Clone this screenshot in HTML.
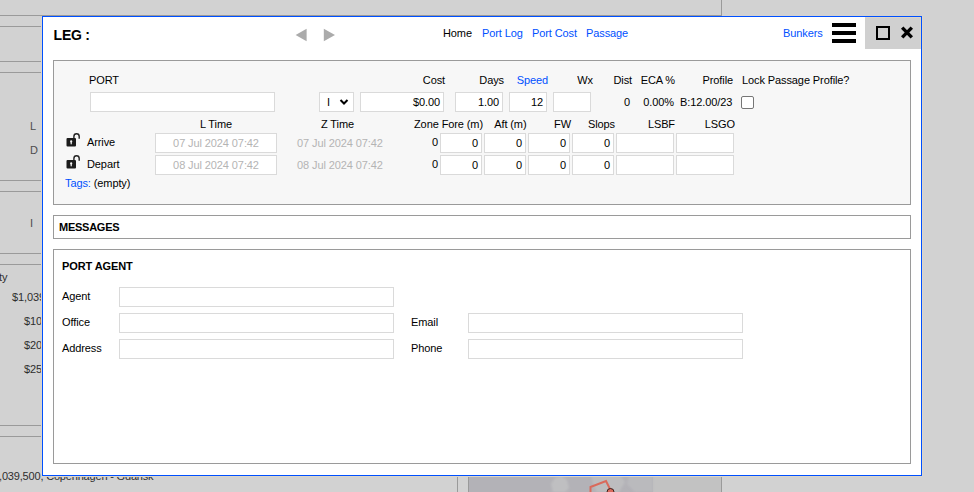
<!DOCTYPE html>
<html><head><meta charset="utf-8">
<style>
*{box-sizing:border-box;margin:0;padding:0}
html,body{width:974px;height:492px;overflow:hidden;background:#d2d2d2;font-family:"Liberation Sans",sans-serif;font-size:11px;color:#000}
.a{position:absolute;white-space:nowrap;line-height:13px;letter-spacing:-0.1px}
.hl{position:absolute;height:1px;background:#9a9a9a}
.vl{position:absolute;width:1px;background:#9a9a9a}
.bt{color:#2e2e2e}
#dlg{position:absolute;left:42px;top:16px;width:880px;height:460px;background:#fff;border:1px solid #0050ff;box-shadow:-1px 0 0 0 #ddd6c9,1px 0 0 0 #ddd6c9,0 1px 0 0 #ddd6c9}
.pn{position:absolute;border:1px solid #9a9a9a}
.p1{background:#f7f7f7}
.in{position:absolute;background:#fff;border:1px solid #dadada;height:20px}
.lnk{color:#0050ff}
.gt{color:#b4b4b4}
.b{font-weight:bold}
</style></head><body>
<!-- background -->
<div class="hl" style="left:0;top:15px;width:722px"></div>
<div class="hl" style="left:0;top:26px;width:42px"></div>
<div class="hl" style="left:0;top:61px;width:42px"></div>
<div class="hl" style="left:0;top:72px;width:42px"></div>
<div class="hl" style="left:0;top:180px;width:42px"></div>
<div class="hl" style="left:0;top:191px;width:42px"></div>
<div class="hl" style="left:0;top:253px;width:42px"></div>
<div class="hl" style="left:0;top:264px;width:42px"></div>
<div class="hl" style="left:0;top:425px;width:42px"></div>
<div class="hl" style="left:0;top:436px;width:42px"></div>
<div class="vl" style="left:721px;top:0;height:16px"></div>
<div class="vl" style="left:457px;top:476px;height:16px"></div>
<div class="vl" style="left:468px;top:476px;height:16px"></div>
<div class="vl" style="left:721px;top:476px;height:16px"></div>
<div style="position:absolute;left:469px;top:476px;width:252px;height:16px;background:#b3b2b7"></div>
<div style="position:absolute;left:653px;top:476px;width:68px;height:16px;background:#c2c2c2"></div>
<svg style="position:absolute;left:469px;top:476px" width="252" height="16">
<defs><filter id="bl" x="-50%" y="-50%" width="200%" height="200%"><feGaussianBlur stdDeviation="1.2"/></filter></defs>
<g filter="url(#bl)" fill="#bfbfc1">
<path d="M86,2 L92,0 L98,4 L100,12 L96,16 L84,16 L82,8 Z"/>
<path d="M122,-2 L150,-2 L156,6 L150,16 L128,16 L124,8 Z" fill="#bdbdbf"/>
<path d="M160,0 L184,0 L184,16 L166,16 L158,8 Z" fill="#bababd"/>
</g>
<polyline points="121.5,16 121.5,11 137,5 141,13" fill="none" stroke="#d96a5c" stroke-width="2"/>
<circle cx="141.5" cy="16" r="3.5" fill="#d96a5c" stroke="#3a1f1a" stroke-width="1"/>
</svg>
<div class="a" style="color:#4d4d4d;left:30px;top:120px">L</div>
<div class="a" style="color:#4d4d4d;left:30px;top:144px">D</div>
<div class="a" style="color:#4d4d4d;left:30px;top:217px">I</div>
<div class="a bt" style="left:-1px;top:271px">ty</div>
<div class="a bt" style="left:12px;top:291px">$1,039</div>
<div class="a bt" style="left:24px;top:315px">$10</div>
<div class="a bt" style="left:24px;top:339px">$20</div>
<div class="a bt" style="left:24px;top:363px">$25</div>
<div class="a bt" style="left:-1px;top:470px;letter-spacing:-0.18px">,039,500, Copenhagen - Gdansk</div>

<div id="dlg"></div>
<!-- header -->
<div class="a b" style="left:53.6px;top:27px;font-size:14px;line-height:16px;letter-spacing:-0.25px">LEG :</div>
<svg style="position:absolute;left:290px;top:24px" width="50" height="22">
<polygon points="5.6,11 16.6,4.7 16.6,17.3" fill="#ababab"/>
<polygon points="33.8,4.7 45,11 33.8,17.3" fill="#ababab"/>
</svg>
<div class="a" style="left:443px;top:27px">Home</div>
<div class="a lnk" style="left:482px;top:27px">Port Log</div>
<div class="a lnk" style="left:532px;top:27px">Port Cost</div>
<div class="a lnk" style="left:586px;top:27px">Passage</div>
<div class="a lnk" style="left:783px;top:27px">Bunkers</div>
<div style="position:absolute;left:832px;top:23px;width:24px;height:4px;background:#000"></div>
<div style="position:absolute;left:832px;top:31px;width:24px;height:4px;background:#000"></div>
<div style="position:absolute;left:832px;top:39px;width:24px;height:4px;background:#000"></div>
<div style="position:absolute;left:865px;top:17px;width:56px;height:32px;background:#d0d0d0;border-top:1px solid #ddd6c9;border-right:1px solid #ddd6c9"></div>
<div style="position:absolute;left:876px;top:26px;width:14px;height:14px;border:2px solid #000"></div>
<svg style="position:absolute;left:900px;top:26px" width="14" height="14">
<path d="M2.2,1.6 L11.8,11.4 M11.8,1.6 L2.2,11.4" stroke="#000" stroke-width="3.4" stroke-linecap="butt"/>
</svg>

<!-- panel 1 -->
<div class="pn" style="left:53px;top:60px;width:858px;height:145px;background:#f7f7f7"></div>
<div class="a" style="left:89px;top:74px">PORT</div>
<div class="a" style="left:385px;top:74px;width:60px;text-align:right">Cost</div>
<div class="a" style="left:444px;top:74px;width:60px;text-align:right">Days</div>
<div class="a lnk" style="left:488px;top:74px;width:60px;text-align:right">Speed</div>
<div class="a" style="left:533px;top:74px;width:60px;text-align:right">Wx</div>
<div class="a" style="left:572px;top:74px;width:60px;text-align:right">Dist</div>
<div class="a" style="left:615px;top:74px;width:60px;text-align:right">ECA %</div>
<div class="a" style="left:673px;top:74px;width:60px;text-align:right">Profile</div>
<div class="a" style="left:742px;top:74px">Lock Passage Profile?</div>

<div class="in" style="left:90px;top:92px;width:185px"></div>
<div class="in" style="left:319px;top:92px;width:35px"></div>
<div class="a" style="left:327px;top:96px">I</div>
<svg style="position:absolute;left:339px;top:98px" width="11" height="9">
<path d="M1.5,2 L5,5.5 L8.5,2" fill="none" stroke="#000" stroke-width="2"/>
</svg>
<div class="in" style="left:360px;top:92px;width:84px"></div>
<div class="a" style="left:380px;top:96px;width:60px;text-align:right">$0.00</div>
<div class="in" style="left:455px;top:92px;width:48px"></div>
<div class="a" style="left:439px;top:96px;width:60px;text-align:right">1.00</div>
<div class="in" style="left:509px;top:92px;width:38px"></div>
<div class="a" style="left:483px;top:96px;width:60px;text-align:right">12</div>
<div class="in" style="left:553px;top:92px;width:38px"></div>
<div class="a" style="left:570px;top:96px;width:60px;text-align:right">0</div>
<div class="a" style="left:614px;top:96px;width:60px;text-align:right">0.00%</div>
<div class="a" style="left:680px;top:96px">B:12.00/23</div>
<div style="position:absolute;left:741px;top:96px;width:13px;height:13px;border:1px solid #767676;border-radius:2px;background:#fff"></div>

<div class="a" style="left:155px;top:118px;width:122px;text-align:center">L Time</div>
<div class="a" style="left:295px;top:118px;width:85px;text-align:center">Z Time</div>
<div class="a" style="left:383px;top:118px;width:100px;text-align:right">Zone Fore (m)</div>
<div class="a" style="left:466.5px;top:118px;width:60px;text-align:right">Aft (m)</div>
<div class="a" style="left:511px;top:118px;width:60px;text-align:right">FW</div>
<div class="a" style="left:555px;top:118px;width:60px;text-align:right">Slops</div>
<div class="a" style="left:615px;top:118px;width:60px;text-align:right">LSBF</div>
<div class="a" style="left:675px;top:118px;width:60px;text-align:right">LSGO</div>

<!-- arrive row -->
<svg style="position:absolute;left:64px;top:132px" width="18" height="16">
<path d="M9.9,6.5 V4.4 A2.65,2.65 0 0 1 15.2,4.4 V6.7" fill="none" stroke="#222" stroke-width="1.4"/>
<rect x="2.5" y="6" width="9.5" height="8.5" rx="1" fill="#1c1c1c"/>
<circle cx="7.2" cy="9.4" r="1.1" fill="#f7f7f7"/>
<rect x="6.6" y="9.4" width="1.2" height="2.9" fill="#f7f7f7"/>
</svg>
<div class="a" style="left:87px;top:136px">Arrive</div>
<div class="in" style="left:155px;top:133px;width:122px"></div>
<div class="a gt" style="left:155px;top:137px;width:122px;text-align:center">07 Jul 2024 07:42</div>
<div class="a gt" style="left:297px;top:137px">07 Jul 2024 07:42</div>
<div class="a" style="left:378px;top:136px;width:60px;text-align:right">0</div>
<div class="in" style="left:440px;top:133px;width:42px"></div>
<div class="a" style="left:418px;top:137px;width:60px;text-align:right">0</div>
<div class="in" style="left:484px;top:133px;width:42px"></div>
<div class="a" style="left:462px;top:137px;width:60px;text-align:right">0</div>
<div class="in" style="left:528px;top:133px;width:42px"></div>
<div class="a" style="left:506px;top:137px;width:60px;text-align:right">0</div>
<div class="in" style="left:572px;top:133px;width:42px"></div>
<div class="a" style="left:550px;top:137px;width:60px;text-align:right">0</div>
<div class="in" style="left:616px;top:133px;width:58px"></div>
<div class="in" style="left:676px;top:133px;width:58px"></div>

<!-- depart row -->
<svg style="position:absolute;left:64px;top:154px" width="18" height="16">
<path d="M9.9,6.5 V4.4 A2.65,2.65 0 0 1 15.2,4.4 V6.7" fill="none" stroke="#222" stroke-width="1.4"/>
<rect x="2.5" y="6" width="9.5" height="8.5" rx="1" fill="#1c1c1c"/>
<circle cx="7.2" cy="9.4" r="1.1" fill="#f7f7f7"/>
<rect x="6.6" y="9.4" width="1.2" height="2.9" fill="#f7f7f7"/>
</svg>
<div class="a" style="left:87px;top:158px">Depart</div>
<div class="in" style="left:155px;top:155px;width:122px"></div>
<div class="a gt" style="left:155px;top:159px;width:122px;text-align:center">08 Jul 2024 07:42</div>
<div class="a gt" style="left:297px;top:159px">08 Jul 2024 07:42</div>
<div class="a" style="left:378px;top:158px;width:60px;text-align:right">0</div>
<div class="in" style="left:440px;top:155px;width:42px"></div>
<div class="a" style="left:418px;top:159px;width:60px;text-align:right">0</div>
<div class="in" style="left:484px;top:155px;width:42px"></div>
<div class="a" style="left:462px;top:159px;width:60px;text-align:right">0</div>
<div class="in" style="left:528px;top:155px;width:42px"></div>
<div class="a" style="left:506px;top:159px;width:60px;text-align:right">0</div>
<div class="in" style="left:572px;top:155px;width:42px"></div>
<div class="a" style="left:550px;top:159px;width:60px;text-align:right">0</div>
<div class="in" style="left:616px;top:155px;width:58px"></div>
<div class="in" style="left:676px;top:155px;width:58px"></div>

<div class="a" style="left:65px;top:177px"><span class="lnk">Tags:</span> (empty)</div>

<!-- panel 2 -->
<div class="pn" style="left:53px;top:215px;width:858px;height:24px;background:#fff"></div>
<div class="a b" style="left:59px;top:221px;letter-spacing:-0.25px">MESSAGES</div>

<!-- panel 3 -->
<div class="pn" style="left:53px;top:249px;width:858px;height:215px;background:#fff"></div>
<div class="a b" style="left:62px;top:260px">PORT AGENT</div>
<div class="a" style="left:62px;top:290px">Agent</div>
<div class="in" style="left:119px;top:287px;width:275px"></div>
<div class="a" style="left:62px;top:316px">Office</div>
<div class="in" style="left:119px;top:313px;width:275px"></div>
<div class="a" style="left:411px;top:316px">Email</div>
<div class="in" style="left:468px;top:313px;width:275px"></div>
<div class="a" style="left:62px;top:342px">Address</div>
<div class="in" style="left:119px;top:339px;width:275px"></div>
<div class="a" style="left:411px;top:342px">Phone</div>
<div class="in" style="left:468px;top:339px;width:275px"></div>
</body></html>
